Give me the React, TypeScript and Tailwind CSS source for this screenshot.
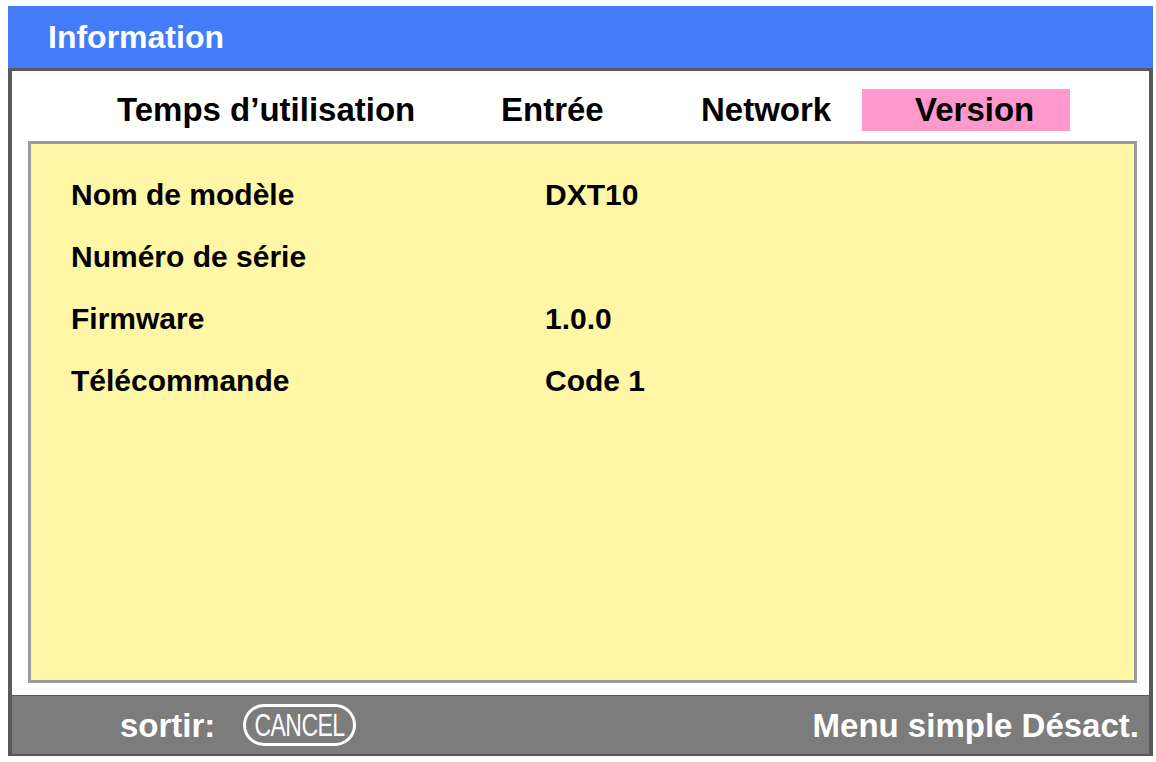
import React from 'react';

const tabs = [
  { label: "Temps d’utilisation", w: 'w-[384px]' },
  { label: 'Entrée', w: 'w-[200px]' },
  { label: 'Network', w: 'w-[161px]' },
];

const rows = [
  { label: 'Nom de modèle', value: 'DXT10' },
  { label: 'Numéro de série', value: '' },
  { label: 'Firmware', value: '1.0.0' },
  { label: 'Télécommande', value: 'Code 1' },
];

const App = () => {
  return (
    <div className="w-[1156px] h-[762px] bg-white pl-[8px] pt-[6px] font-['Liberation_Sans',Arial,sans-serif] font-bold">
      <div className="w-[1145px] flex flex-col">
        {/* Title bar */}
        <div className="h-[62px] bg-[#437bf9] pl-[40px] flex items-center">
          <span className="text-[32px] leading-[62px] text-white">Information</span>
        </div>

        {/* Body */}
        <div className="h-[627px] bg-white border-x-4 border-t-[3px] border-[#595959] flex flex-col pt-[18px] pl-[16px] pr-[12px] pb-[12px]">
          {/* Tabs */}
          <div className="h-[42px] flex items-center pl-[89px]">
            {tabs.map((t) => (
              <div key={t.label} className={`${t.w} text-[33px] leading-[42px] text-black whitespace-nowrap`}>
                {t.label}
              </div>
            ))}
            <div className="w-[208px] h-[42px] bg-[#ff99cc] pl-[53px] text-[33px] leading-[42px] text-black">
              Version
            </div>
          </div>

          {/* Info panel */}
          <div className="mt-[10px] flex-1 bg-[#fff6a6] border-[3px] border-[#9b9b9b] pt-[20px] pl-[40px]">
            {rows.map((r) => (
              <div key={r.label} className="h-[62px] flex items-center text-[30px] leading-[62px] text-black">
                <div className="w-[474px] whitespace-nowrap">{r.label}</div>
                <div className="whitespace-nowrap">{r.value}</div>
              </div>
            ))}
          </div>
        </div>

        {/* Footer */}
        <div className="h-[61px] bg-[#7c7c7c] border-x-4 border-t border-b-2 border-[#595959] flex items-center justify-between pl-[108px] pr-[10px] text-white">
          <div className="flex items-center gap-[28px]">
            <span className="text-[33px] leading-none">sortir:</span>
            <div className="w-[113px] h-[42px] rounded-full border-[3px] border-white flex items-center justify-center overflow-visible">
              <span className="inline-block scale-x-[0.72] font-normal text-[32px] leading-none tracking-tight">CANCEL</span>
            </div>
          </div>
          <span className="text-[33px] leading-none">Menu simple Désact.</span>
        </div>
      </div>
    </div>
  );
};

export default App;
